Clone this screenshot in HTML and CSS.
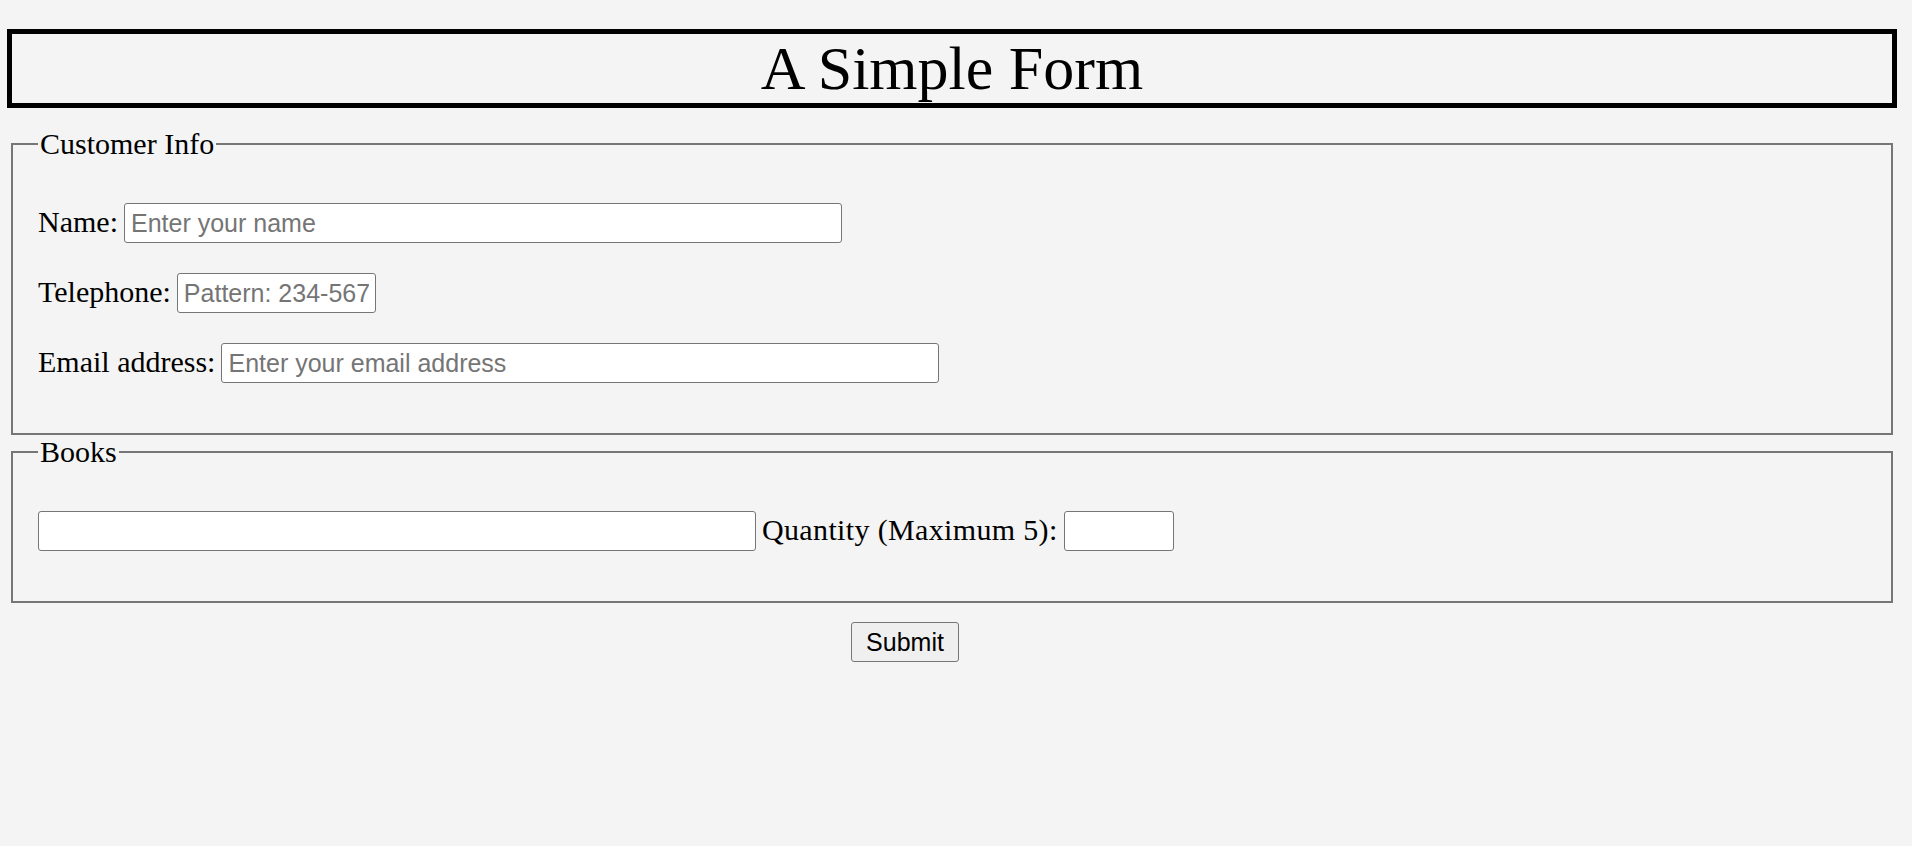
FILE: index.html
```html
<!DOCTYPE html>
<html lang="en">
<head>
<meta charset="utf-8">
<title>A Simple Form</title>
<link rel="stylesheet" href="styles.css">
</head>
<body>
<h1 class="title">A Simple Form</h1>
<form class="form">
  <fieldset class="group group-customer">
    <legend class="legend">Customer Info</legend>
    <div class="row">
      <label class="label" for="name">Name:</label>
      <input class="field field-wide" id="name" type="text" placeholder="Enter your name">
    </div>
    <div class="row">
      <label class="label" for="tel">Telephone:</label>
      <input class="field field-tel" id="tel" type="tel" placeholder="Pattern: 234-5678">
    </div>
    <div class="row">
      <label class="label" for="email">Email address:</label>
      <input class="field field-wide" id="email" type="email" placeholder="Enter your email address">
    </div>
  </fieldset>
  <fieldset class="group group-books">
    <legend class="legend">Books</legend>
    <div class="row">
      <input class="field field-wide" type="text" aria-label="Book">
      <label class="label label-qty" for="qty">Quantity (Maximum 5):</label>
      <input class="field field-qty" id="qty" type="text">
    </div>
  </fieldset>
  <div class="actions">
    <button class="submit" type="submit">Submit</button>
  </div>
</form>
</body>
</html>
```

FILE: styles.css
```css
html, body {
  background: #f4f4f4;
}

body {
  margin: 0;
  font-family: "Liberation Serif", "Times New Roman", serif;
  color: #000;
}

.title {
  margin: 29px 15px 0 7px;
  border: 5px solid #000;
  font-size: 62px;
  font-weight: normal;
  line-height: 69px;
  text-align: center;
}

.form {
  margin: 19px 19px 0 11px;
}

.group {
  margin: 0;
  border: 2px solid #767676;
  padding: 42px 25px 50px 25px;
  font-size: 30px;
}

.legend {
  padding: 0 2px;
  font-size: 30px;
  line-height: 34px;
}

.row {
  display: flex;
  align-items: baseline;
  gap: 6px;
}

.row + .row {
  margin-top: 30px;
}

.label {
  white-space: nowrap;
}

.label-qty {
  letter-spacing: 0.35px;
}

.field {
  box-sizing: border-box;
  height: 40px;
  margin: 0;
  padding: 0 6px;
  border: 1px solid #767676;
  border-radius: 3px;
  background: #fff;
  font-family: "Liberation Sans", Arial, sans-serif;
  font-size: 25px;
  color: #000;
}

.field::placeholder {
  color: #757575;
}

.field-wide {
  width: 718px;
}

.field-tel {
  width: 199px;
}

.field-qty {
  width: 110px;
}

.actions {
  display: flex;
  justify-content: center;
  padding: 19px 94px 0 0;
}

.submit {
  box-sizing: border-box;
  height: 40px;
  padding: 0 14px;
  border: 1px solid #767676;
  border-radius: 3px;
  background: #efefef;
  font-family: "Liberation Sans", Arial, sans-serif;
  font-size: 25px;
  color: #000;
}
```
